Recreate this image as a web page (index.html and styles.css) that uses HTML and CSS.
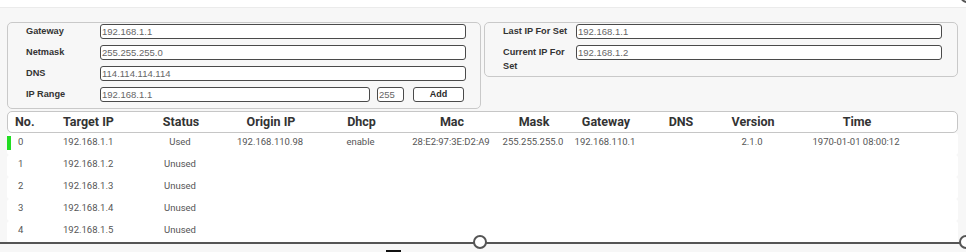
FILE: index.html
```html
<!DOCTYPE html>
<html lang="en">
<head>
	<meta charset="UTF-8">
	<title>IP Setter</title>
	<link rel="stylesheet" href="styles.css">
</head>
<body>
	<div class="topstrip"></div>
	<div class="settings">
		<div class="group group-left">
			<div class="label">Gateway</div>
			<div class="field">192.168.1.1</div>
			<div class="label">Netmask</div>
			<div class="field">255.255.255.0</div>
			<div class="label">DNS</div>
			<div class="field">114.114.114.114</div>
			<div class="label">IP Range</div>
			<div class="range">
				<div class="field field-grow">192.168.1.1</div>
				<div class="field field-count">255</div>
				<div class="btn">Add</div>
			</div>
		</div>
		<div class="group group-right">
			<div class="label">Last IP For Set</div>
			<div class="field">192.168.1.1</div>
			<div class="label">Current IP For Set</div>
			<div class="field">192.168.1.2</div>
		</div>
	</div>

	<div class="table">
		<div class="row head">
			<div class="c c-no">No.</div>
			<div class="c c-ip">Target IP</div>
			<div class="c">Status</div>
			<div class="c">Origin IP</div>
			<div class="c">Dhcp</div>
			<div class="c">Mac</div>
			<div class="c">Mask</div>
			<div class="c">Gateway</div>
			<div class="c">DNS</div>
			<div class="c">Version</div>
			<div class="c">Time</div>
		</div>
		<div class="row item">
			<div class="c c-no"><span class="mark on"></span>0</div>
			<div class="c c-ip">192.168.1.1</div>
			<div class="c">Used</div>
			<div class="c">192.168.110.98</div>
			<div class="c">enable</div>
			<div class="c">28:E2:97:3E:D2:A9</div>
			<div class="c">255.255.255.0</div>
			<div class="c">192.168.110.1</div>
			<div class="c"></div>
			<div class="c">2.1.0</div>
			<div class="c">1970-01-01 08:00:12</div>
		</div>
		<div class="row item">
			<div class="c c-no"><span class="mark"></span>1</div>
			<div class="c c-ip">192.168.1.2</div>
			<div class="c">Unused</div>
		</div>
		<div class="row item">
			<div class="c c-no"><span class="mark"></span>2</div>
			<div class="c c-ip">192.168.1.3</div>
			<div class="c">Unused</div>
		</div>
		<div class="row item">
			<div class="c c-no"><span class="mark"></span>3</div>
			<div class="c c-ip">192.168.1.4</div>
			<div class="c">Unused</div>
		</div>
		<div class="row item">
			<div class="c c-no"><span class="mark"></span>4</div>
			<div class="c c-ip">192.168.1.5</div>
			<div class="c">Unused</div>
		</div>
	</div>

	<!-- selection handles of the editor -->
	<div class="sel-line"></div>
	<div class="handle handle-mid"></div>
	<div class="handle handle-right"></div>
	<div class="handle handle-top"></div>
	<div class="tab-mark"></div>
</body>
</html>
```

FILE: styles.css
```css
body {
	margin: 0;
	width: 966px;
	height: 252px;
	overflow: hidden;
	position: relative;
	background: #f7f7f7;
	font-family: "Liberation Sans", Arial, sans-serif;
}
.topstrip {
	height: 7px;
	background: #ffffff;
	border-bottom: 1px solid #ebebeb;
}
.settings {
	display: flex;
	align-items: flex-start;
	gap: 3px;
	padding: 14px 0 0 7px;
}
.group {
	box-sizing: border-box;
	width: 474px;
	border: 1px solid #c9c9c9;
	border-radius: 5px;
	display: grid;
	row-gap: 6px;
	align-items: start;
}
.group-left {
	height: 87px;
	padding: 1px 14px 0 18px;
	grid-template-columns: 74px 1fr;
	grid-template-rows: repeat(4, 15px);
}
.group-right {
	height: 55px;
	padding: 1px 15px 0 18px;
	grid-template-columns: 73px 1fr;
	grid-template-rows: 15px auto;
}
.label {
	font-size: 9.2px;
	font-weight: bold;
	color: #333;
	line-height: 15px;
	height: 15px;
}
.group-right .label {
	line-height: 14px;
	height: auto;
}
.field {
	box-sizing: border-box;
	height: 15px;
	border: 1px solid #4a4a4a;
	border-radius: 3px;
	background: #ffffff;
	font-size: 9.5px;
	line-height: 13px;
	color: #666;
	padding-left: 1px;
}
.range {
	display: flex;
	height: 15px;
}
.field-grow {
	flex: 1;
}
.field-count {
	width: 27px;
	margin-left: 7px;
}
.btn {
	box-sizing: border-box;
	width: 51px;
	height: 15px;
	margin: 0 2px 0 9px;
	border: 1px solid #4a4a4a;
	border-radius: 3px;
	background: #ffffff;
	font-size: 9px;
	font-weight: bold;
	line-height: 13px;
	text-align: center;
	color: #2b2b2b;
}

.table {
	margin: 2px 8px 0 7px;
	font-family: Roboto, "Liberation Sans", sans-serif;
}
.row {
	display: grid;
	grid-template-columns: 48px 80px 90px 90px 91px 90px 74px 70px 80px 64px 144px;
}
.head {
	box-sizing: border-box;
	height: 22px;
	border: 1px solid #c6c6c6;
	border-radius: 5px;
	background: #ffffff;
	align-items: center;
	font-size: 12.5px;
	font-weight: bold;
	color: #333;
}
.head .c {
	margin-top: -1px;
}
.item {
	height: 22px;
	background: #ffffff;
	border-radius: 3px;
	font-size: 9.5px;
	color: #555;
	line-height: 14px;
	padding-top: 2px;
	box-sizing: border-box;
}
.c {
	text-align: center;
	white-space: nowrap;
}
.head .c-no {
	text-align: left;
	padding-left: 8px;
	margin-left: -1px;
}
.c-ip {
	text-align: left;
	padding-left: 8px;
}
.head .c-ip {
	margin-left: -1px;
}
.item .c-no {
	display: flex;
	align-items: flex-start;
	text-align: left;
}
.mark {
	width: 4px;
	height: 14px;
	margin: 1px 7px 0 0;
}
.mark.on {
	background: #22dd22;
}

.sel-line {
	position: absolute;
	left: 0;
	right: 0;
	top: 242px;
	height: 1.5px;
	background: #555;
}
.handle {
	position: absolute;
	width: 10px;
	height: 10px;
	border: 2.5px solid #555;
	border-radius: 50%;
	background: #ffffff;
}
.handle-mid {
	left: 473px;
	top: 235px;
}
.handle-right {
	left: 959px;
	top: 235px;
}
.handle-top {
	left: 960px;
	top: -11px;
}
.tab-mark {
	position: absolute;
	left: 386px;
	top: 250px;
	width: 15px;
	height: 2px;
	background: #111;
}
```
